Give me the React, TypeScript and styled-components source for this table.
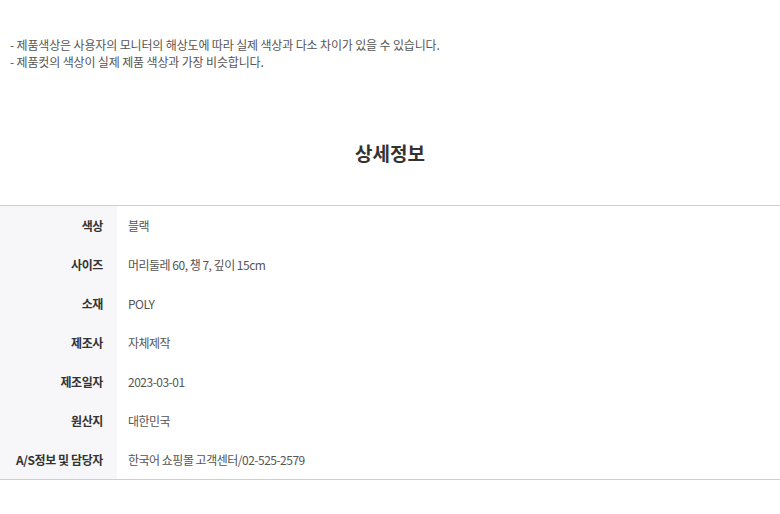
import React from 'react';
import styled, { createGlobalStyle } from 'styled-components';

const GlobalStyle = createGlobalStyle`
  body {
    margin: 0;
    background: #fff;
    font-family: "Noto Sans CJK KR", "Noto Sans", sans-serif;
  }
`;

const Page = styled.div`
  width: 780px;
  padding-top: 36px;
`;

const Notes = styled.ul`
  list-style: none;
  margin: 0;
  padding: 0 0 0 10px;
`;

const Note = styled.li`
  font-size: 12px;
  letter-spacing: -0.15px;
  line-height: 17px;
  color: #555;
`;

const Title = styled.h2`
  margin: 69px 0 0;
  text-align: center;
  font-size: 19px;
  line-height: 28px;
  font-weight: 700;
  color: #333;
`;

const Table = styled.table`
  width: 100%;
  margin-top: 38px;
  border-collapse: collapse;
  border-top: 1px solid #cfcfcf;
  border-bottom: 1px solid #cfcfcf;
`;

const Label = styled.th`
  width: 117px;
  box-sizing: border-box;
  height: 39px;
  padding: 0 14px 0 0;
  background: #f7f7f9;
  text-align: right;
  font-size: 12px;
  letter-spacing: -0.4px;
  font-weight: 700;
  color: #333;
  white-space: nowrap;
`;

const Value = styled.td`
  height: 39px;
  padding: 0 0 0 11px;
  font-size: 12px;
  letter-spacing: -0.5px;
  color: #555;
`;

const rows: [string, string][] = [
  ['색상', '블랙'],
  ['사이즈', '머리둘레 60, 챙 7, 깊이 15cm'],
  ['소재', 'POLY'],
  ['제조사', '자체제작'],
  ['제조일자', '2023-03-01'],
  ['원산지', '대한민국'],
  ['A/S정보 및 담당자', '한국어 쇼핑몰 고객센터/02-525-2579'],
];

export default function App() {
  return (
    <Page>
      <GlobalStyle />
      <Notes>
        <Note>- 제품색상은 사용자의 모니터의 해상도에 따라 실제 색상과 다소 차이가 있을 수 있습니다.</Note>
        <Note>- 제품컷의 색상이 실제 제품 색상과 가장 비슷합니다.</Note>
      </Notes>
      <Title>상세정보</Title>
      <Table>
        <tbody>
          {rows.map(([k, v]) => (
            <tr key={k}>
              <Label>{k}</Label>
              <Value>{v}</Value>
            </tr>
          ))}
        </tbody>
      </Table>
    </Page>
  );
}
